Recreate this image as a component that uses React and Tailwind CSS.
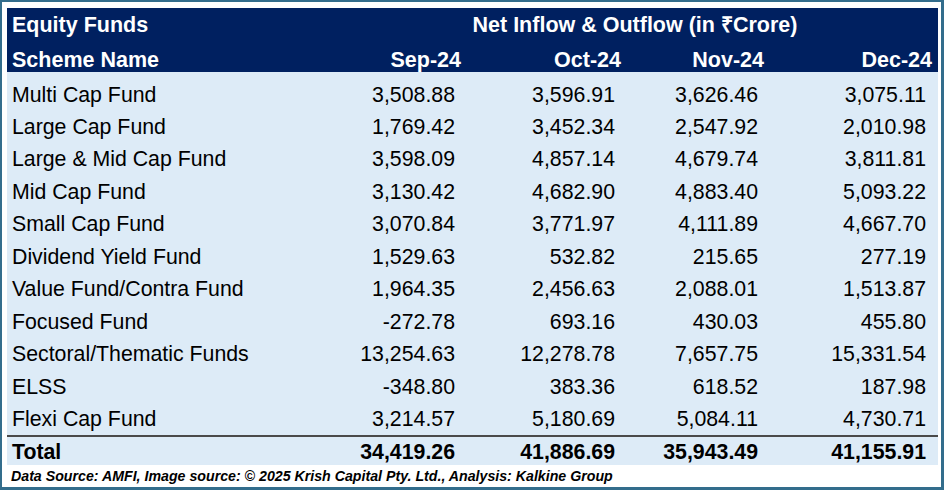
import React from "react";

const rows = [
  ["Multi Cap Fund", "3,508.88", "3,596.91", "3,626.46", "3,075.11"],
  ["Large Cap Fund", "1,769.42", "3,452.34", "2,547.92", "2,010.98"],
  ["Large & Mid Cap Fund", "3,598.09", "4,857.14", "4,679.74", "3,811.81"],
  ["Mid Cap Fund", "3,130.42", "4,682.90", "4,883.40", "5,093.22"],
  ["Small Cap Fund", "3,070.84", "3,771.97", "4,111.89", "4,667.70"],
  ["Dividend Yield Fund", "1,529.63", "532.82", "215.65", "277.19"],
  ["Value Fund/Contra Fund", "1,964.35", "2,456.63", "2,088.01", "1,513.87"],
  ["Focused Fund", "-272.78", "693.16", "430.03", "455.80"],
  ["Sectoral/Thematic Funds", "13,254.63", "12,278.78", "7,657.75", "15,331.54"],
  ["ELSS", "-348.80", "383.36", "618.52", "187.98"],
  ["Flexi Cap Fund", "3,214.57", "5,180.69", "5,084.11", "4,730.71"],
];

const total = ["Total", "34,419.26", "41,886.69", "35,943.49", "41,155.91"];
const months = ["Sep-24", "Oct-24", "Nov-24", "Dec-24"];

const cols = "grid grid-cols-[294px_166px_160px_143px_168px]";

export default function App() {
  return (
    <div
      className="w-[944px] h-[490px] bg-white border-t-2 border-l-2 border-r-[3px] border-b-[3px] border-[#336d8c] pt-[6px] pl-[5px] pr-[3px] overflow-hidden"
      style={{ fontFamily: '"Liberation Sans", Arial, sans-serif' }}
    >
      <div className="w-[931px]">
        {/* header */}
        <div className="bg-[#002060] text-white font-bold text-[21.5px]">
          <div className={`${cols} h-[33px]`}>
            <div className="pl-[5px] pt-[5px] leading-[25px]">Equity Funds</div>
            <div className="col-span-4 pt-[5px] leading-[25px] text-center pl-[31px]">
              Net Inflow &amp; Outflow (in ₹Crore)
            </div>
          </div>
          <div className={`${cols} h-[31px]`}>
            <div className="pl-[5px] pt-[7px] leading-[25px]">Scheme Name</div>
            {months.map((m) => (
              <div key={m} className="pt-[7px] leading-[25px] text-right pr-[6px]">{m}</div>
            ))}
          </div>
        </div>

        {/* body */}
        <div className="bg-[#ddebf7] text-black text-[21.3px]">
          <div className="pb-[6px]">
            {rows.map((r) => (
              <div key={r[0]} className={`${cols} h-[32.47px]`}>
                {r.map((c, i) => (
                  <div
                    key={i}
                    className={
                      i === 0
                        ? "pl-[5px] pt-[10.5px] leading-[25px] whitespace-nowrap"
                        : "pr-[12px] pt-[10.5px] leading-[25px] text-right"
                    }
                  >
                    {c}
                  </div>
                ))}
              </div>
            ))}
          </div>
          <div className="h-[2px] bg-[#4a4a4a]"></div>
          <div className={`${cols} h-[28px] font-bold`}>
            {total.map((c, i) => (
              <div
                key={i}
                className={
                  i === 0
                    ? "pl-[5px] pt-[3px] leading-[25px]"
                    : "pr-[12px] pt-[3px] leading-[25px] text-right"
                }
              >
                {c}
              </div>
            ))}
          </div>
        </div>

        {/* footer */}
        <div className="pl-[4px] h-[22px] leading-[22px] text-[14.2px] font-bold italic text-black whitespace-nowrap">
          Data Source: AMFI, Image source: © 2025 Krish Capital Pty. Ltd., Analysis: Kalkine Group
        </div>
      </div>
    </div>
  );
}
